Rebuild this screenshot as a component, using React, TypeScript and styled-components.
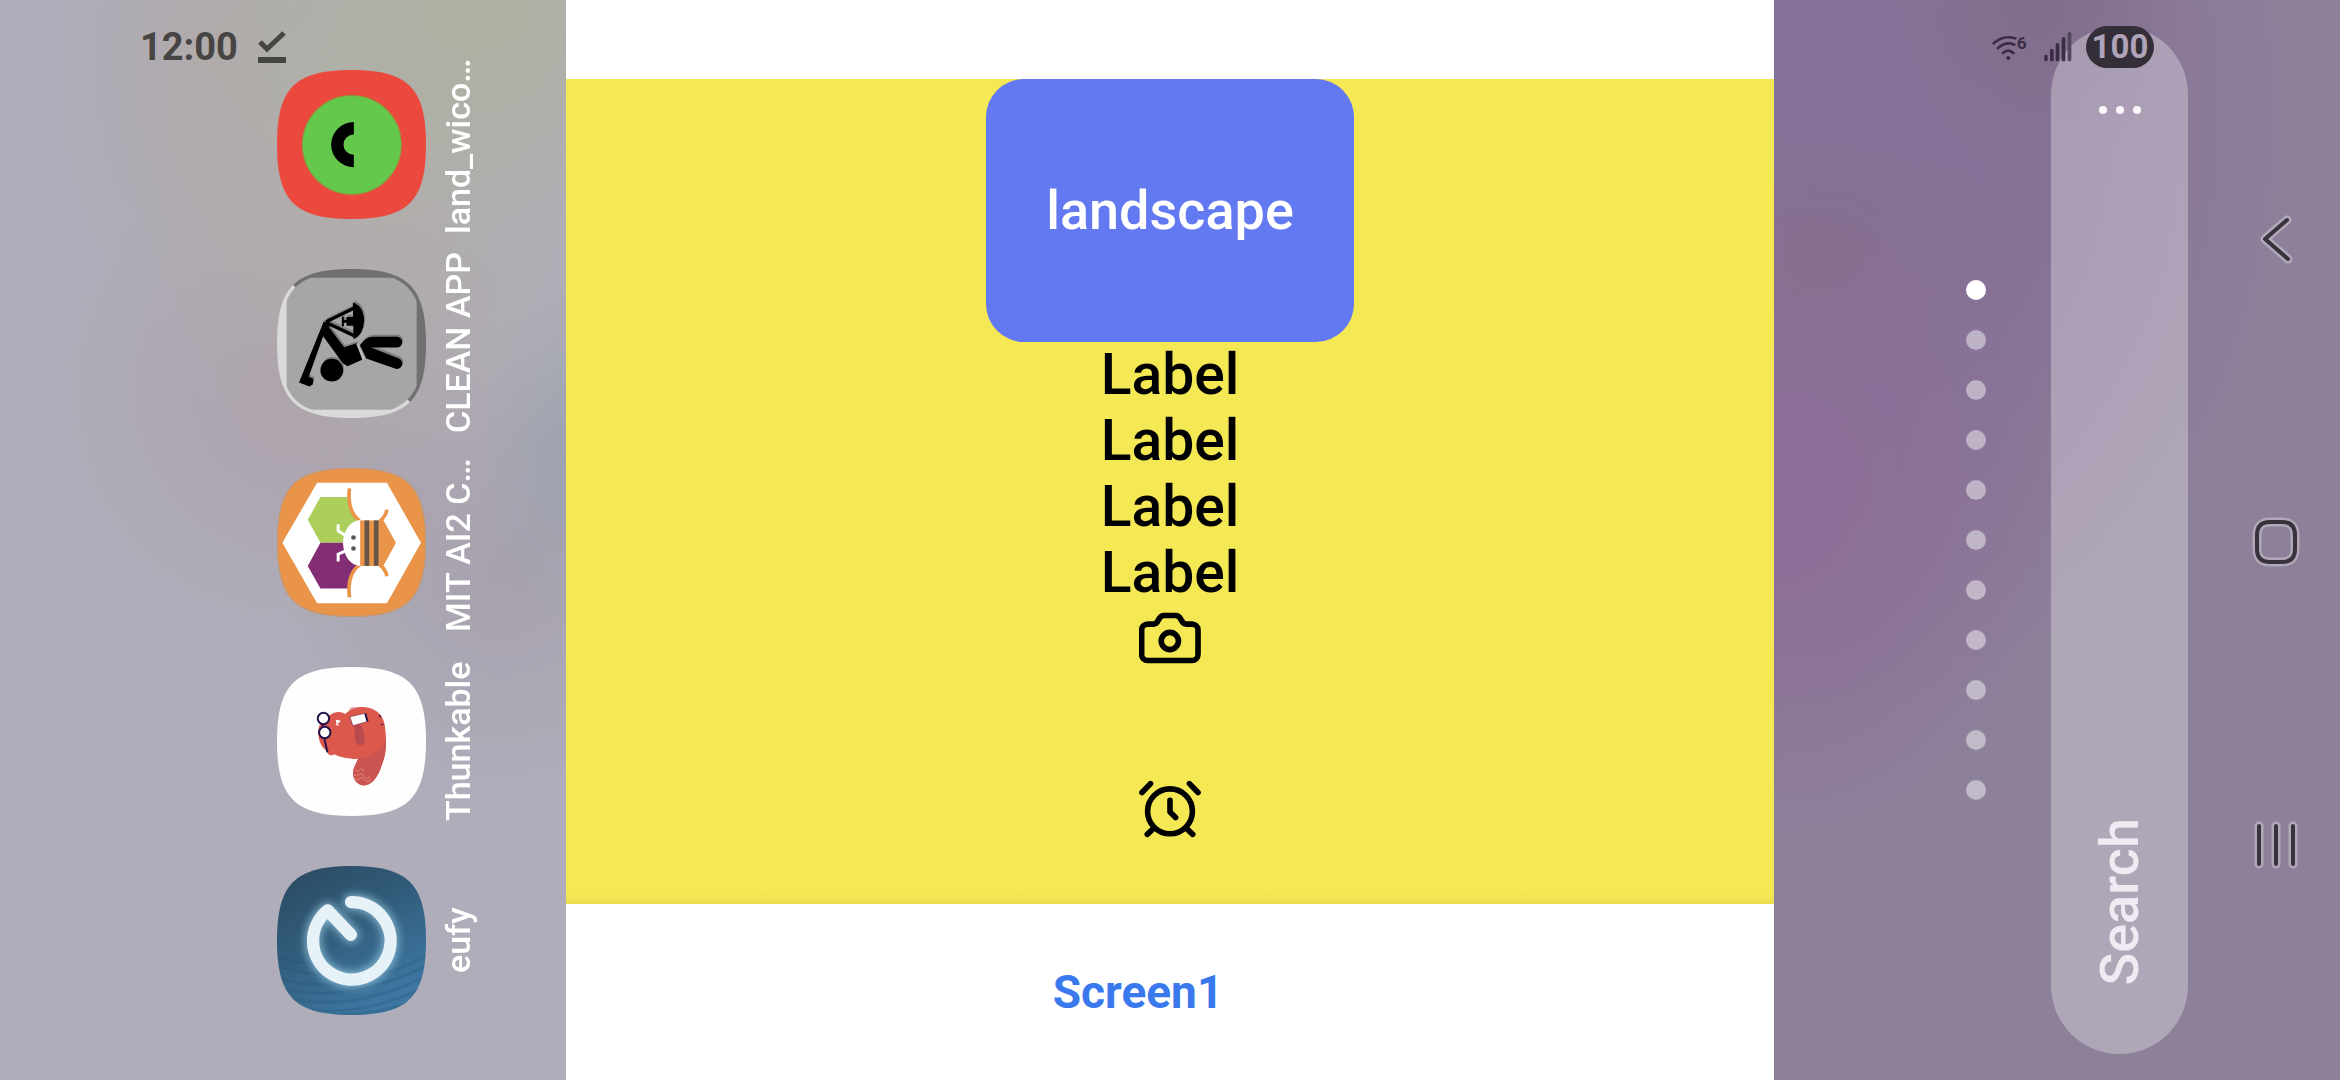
import React from 'react';
import styled, { createGlobalStyle } from 'styled-components';

const GlobalStyle = createGlobalStyle`
  *, *::before, *::after { box-sizing: border-box; }
  body {
    margin: 0;
    font-family: Roboto, "Liberation Sans", sans-serif;
    background: #ffffff;
  }
  button {
    margin: 0;
    padding: 0;
    border: 0;
    background: none;
    color: inherit;
    font: inherit;
    cursor: pointer;
  }
  svg { display: block; flex: none; }
`;

const Screen = styled.div`
  position: relative;
  display: grid;
  grid-template-columns: minmax(0, 566fr) minmax(0, 1208fr) minmax(0, 566fr);
  min-height: 100vh;
`;

/* ---------- status bar ---------- */

const StatusBar = styled.header`
  position: absolute;
  top: 26px;
  left: 0;
  right: 0;
  z-index: 1;
  display: flex;
  align-items: center;
  justify-content: space-between;
  height: 42px;
  padding: 0 186px 0 140px;
  pointer-events: none;
`;

const StatusGroup = styled.div<{ $gap: number }>`
  display: flex;
  align-items: center;
  gap: ${(p) => p.$gap}px;
`;

const Clock = styled.time`
  font-size: 38px;
  line-height: 40px;
  font-weight: 700;
  color: #474543;
`;

const Battery = styled.span`
  display: flex;
  align-items: center;
  justify-content: center;
  width: 68px;
  height: 42px;
  border-radius: 21px;
  background: #332e37;
  color: #aea3b8;
  font-size: 33px;
  line-height: 40px;
  font-weight: 700;
`;

/* ---------- launcher (left) ---------- */

const Launcher = styled.nav`
  display: flex;
  justify-content: flex-end;
  padding: 54px 87px 0 0;
  background:
    radial-gradient(ellipse 300px 220px at 480px 10px, #adb2a1 0%, rgba(173, 178, 161, 0) 100%),
    radial-gradient(ellipse 260px 330px at 380px 160px, rgba(178, 174, 168, 0.9) 0%, rgba(178, 174, 168, 0) 100%),
    radial-gradient(ellipse 150px 280px at 210px 60px, rgba(176, 168, 168, 0.8) 0%, rgba(176, 168, 168, 0) 100%),
    radial-gradient(ellipse 240px 240px at 300px 390px, rgba(173, 159, 169, 0.85) 0%, rgba(173, 159, 169, 0) 100%),
    radial-gradient(ellipse 90px 170px at 566px 460px, rgba(156, 163, 173, 0.9) 0%, rgba(156, 163, 173, 0) 100%),
    radial-gradient(ellipse 220px 220px at 500px 570px, rgba(167, 158, 172, 0.85) 0%, rgba(167, 158, 172, 0) 100%),
    #aeadb9;
`;

const AppList = styled.ul`
  display: flex;
  flex-direction: column;
  gap: 19px;
  margin: 0;
  padding: 0;
  list-style: none;
`;

const AppButton = styled.button`
  display: flex;
  align-items: center;
  gap: 11px;
  height: 180px;
`;

const AppName = styled.span<{ $cut?: boolean }>`
  writing-mode: vertical-rl;
  transform: rotate(180deg);
  height: 180px;
  font-size: 34px;
  line-height: 42px;
  font-weight: 500;
  text-align: ${(p) => (p.$cut ? 'start' : 'center')};
  white-space: nowrap;
  color: #ffffff;
`;

/* ---------- app preview (centre) ---------- */

const Preview = styled.main`
  display: flex;
  flex-direction: column;
  padding-top: 79px;
  background: #ffffff;
`;

const Canvas = styled.section`
  flex: 1;
  display: flex;
  flex-direction: column;
  align-items: center;
  background: linear-gradient(to top, #e8da52 0, #f0e354 5px, #f5e855 16px);
`;

const PrimaryButton = styled.button`
  width: 368px;
  height: 263px;
  border-radius: 38px;
  background: #6279f2;
  color: #ffffff;
  font-size: 54px;
  line-height: 66px;
  font-weight: 500;
`;

const TextLabel = styled.p`
  margin: 0;
  font-size: 57px;
  line-height: 66px;
  font-weight: 500;
  color: #000000;
`;

const IconStack = styled.div`
  display: flex;
  flex-direction: column;
  align-items: center;
  gap: 116px;
  padding-top: 6px;
`;

const TabBar = styled.footer`
  display: flex;
  align-items: center;
  justify-content: center;
  height: 176px;
  padding-right: 64px;
`;

const TabLink = styled.a`
  color: #3a78ee;
  font-size: 46px;
  line-height: 56px;
  font-weight: 700;
  text-decoration: none;
`;

/* ---------- home screen (right) ---------- */

const Home = styled.aside`
  display: flex;
  justify-content: flex-end;
  background:
    radial-gradient(ellipse 150px 180px at 260px 0, rgba(127, 109, 136, 0.8) 0%, rgba(127, 109, 136, 0) 100%),
    radial-gradient(ellipse 180px 150px at 50px 250px, rgba(134, 110, 140, 0.7) 0%, rgba(134, 110, 140, 0) 100%),
    radial-gradient(ellipse 280px 330px at 0 510px, #8c6e98 0%, rgba(140, 110, 152, 0.8) 35%, rgba(140, 110, 152, 0) 100%),
    radial-gradient(ellipse 440px 600px at 80px 110px, #84729a 0%, rgba(134, 113, 150, 0.9) 50%, rgba(134, 113, 150, 0) 100%),
    #8d8099;
`;

const Pager = styled.ul`
  display: flex;
  flex-direction: column;
  justify-content: center;
  gap: 30px;
  margin: 0 65px 0 0;
  padding: 0;
  list-style: none;
`;

const PageDot = styled.li<{ $active: boolean }>`
  width: 20px;
  height: 20px;
  border-radius: 50%;
  background: ${(p) => (p.$active ? '#ffffff' : 'rgba(255, 255, 255, 0.46)')};
`;

const SearchPill = styled.div`
  display: flex;
  flex-direction: column;
  align-items: center;
  justify-content: space-between;
  width: 137px;
  margin: 26px 0;
  padding: 70px 0 68px;
  border-radius: 69px;
  background: rgba(255, 255, 255, 0.3);
`;

const SearchButton = styled.button`
  writing-mode: vertical-rl;
  transform: rotate(180deg);
  font-size: 54px;
  line-height: 66px;
  font-weight: 500;
  color: #f0ebf3;
`;

const MoreButton = styled.button`
  display: flex;
  align-items: center;
  justify-content: center;
  height: 28px;
  width: 60px;
`;

const NavBar = styled.nav`
  display: flex;
  flex-direction: column;
  align-items: center;
  justify-content: center;
  gap: 243px;
  width: 128px;
  margin-left: 24px;
  padding-top: 4px;
`;

const NavButton = styled.button`
  display: flex;
  align-items: center;
  justify-content: center;
  width: 60px;
  height: 60px;
`;

/* ---------- drawings ---------- */

const SQUIRCLE =
  'M0 223C0 54 54 0 223 0S446 54 446 223 392 446 223 446 0 392 0 223Z';

function AppIcon({ id, x, y, children }: { id: string; x: number; y: number; children: React.ReactNode }) {
  return (
    <svg width="149" height="149" viewBox={`${x} ${y} 446 446`} aria-hidden="true">
      <clipPath id={id}>
        <path d={SQUIRCLE} transform={`translate(${x} ${y})`} />
      </clipPath>
      <g clipPath={`url(#${id})`}>{children}</g>
    </svg>
  );
}

const LandIcon = () => (
  <AppIcon id="clip-land" x={51} y={57}>
    <rect x="51" y="57" width="446" height="446" fill="#eb493d" />
    <circle cx="275" cy="281" r="148" fill="#64c84c" stroke="#8a9a3c" strokeWidth="3" />
    <path d="M281 213A68 67.500 0 0 0 281 348V311A31 30.500 0 0 1 281 250Z" fill="#000" />
  </AppIcon>
);

const Worker = () => (
  <>
    <circle cx="215" cy="957" r="34" />
    <path d="M191 811L203 816 146 976 160 983 158 1000 148 1006 117 994Z" />
    <path d="M198 812L284 770M198 814L282 854" fill="none" stroke="currentColor" strokeWidth="10" />
    <path d="M278 754Q310 764 312 808Q310 852 280 864Z" />
    <path d="M245 797h6v10h8v-9h22v26h-22v-9h-8v10h-6Z" />
    <path d="M190 812L206 818 208 830 252 888 290 876 306 926 262 945 248 936 189 855Z" />
    <path d="M299 882Q318 857 338 857H410A16 16 0 0 1 410 889H332L416 922A16 16 0 0 1 404 952L318 922Z" />
  </>
);

const CleanIcon = () => (
  <AppIcon id="clip-clean" x={51} y={654}>
    <path d="M51 654H497V1100Z" fill="#707070" />
    <path d="M51 654V1100H497Z" fill="#dadada" />
    <clipPath id="clip-clean-face">
      <rect x="80" y="680" width="389" height="395" rx="26" />
    </clipPath>
    <g clipPath="url(#clip-clean-face)">
      <path d={SQUIRCLE} transform="translate(60 663) scale(.96)" fill="#a6a6a6" />
    </g>
    <g fill="#6e6e6e" color="#6e6e6e" opacity=".7" transform="translate(3 -6)">
      <Worker />
    </g>
    <g fill="#000" color="#000">
      <Worker />
    </g>
    <path d="M291 877L311 925" stroke="#bdbdbd" strokeWidth="6" />
  </AppIcon>
);

const MitIcon = () => (
  <AppIcon id="clip-mit" x={51} y={50}>
    <rect x="51" y="50" width="446" height="446" fill="#e99449" />
    <path d="M67 274L171 94H380L482 274 380 455H171Z" fill="#fff" />
    <path d="M143 205L181 137H264Q266 190 300 207V274H181Z" fill="#accf5c" />
    <path d="M143 343L181 274H300V342Q266 359 264 411H181Z" fill="#832d75" />
    <path d="M355 207H370L407 274 370 342H355Z" fill="#e99449" />
    <g fill="none" stroke="#e99449" strokeWidth="11">
      <path d="M268 111C262 158 274 190 298 208M380 175Q376 196 358 210" />
      <path d="M268 437C262 390 274 358 298 340M380 374Q376 353 358 339" />
    </g>
    <path d="M301 206A52 68 0 0 0 301 343Z" fill="#fff" />
    <path d="M234 218V238L256 252M234 330V308L258 297" fill="none" stroke="#fff" strokeWidth="9" />
    <circle cx="280" cy="258" r="7" fill="#5b5450" />
    <circle cx="280" cy="291" r="7" fill="#5b5450" />
    <rect x="300" y="207" width="56" height="136" fill="#e99449" />
    <rect x="313" y="207" width="14" height="136" fill="#675548" />
    <rect x="341" y="207" width="14" height="136" fill="#675548" />
    <path d={SQUIRCLE} transform="translate(51 50)" fill="none" stroke="#b9997f" strokeWidth="5" />
  </AppIcon>
);

const ThunkableIcon = () => (
  <AppIcon id="clip-thunkable" x={51} y={648}>
    <rect x="51" y="648" width="446" height="446" fill="#fefefe" />
    <ellipse cx="280" cy="776" rx="13" ry="9" fill="#e3b9bb" />
    <path
      d="M175 850C172 820 188 800 210 792C225 779 245 781 255 789C275 768 300 766 320 769C352 774 370 795 374 825C380 870 378 900 365 940C355 975 335 1003 310 1003C285 1000 275 975 280 955C285 940 290 932 294 923C270 924 240 918 222 909C212 917 203 910 200 900C182 885 177 870 175 850Z"
      fill="#dd584c"
    />
    <path
      d="M377 868C378 900 374 920 365 940C355 975 335 1003 310 1003C285 1000 275 975 280 955C285 940 290 932 294 923C330 918 360 900 377 868Z"
      fill="#cb5350"
    />
    <path d="M282 824Q292 818 304 822L314 862Q314 880 302 883Q288 882 285 868Z" fill="#b94a4d" />
    <path
      d="M284 957q8 8 14-1t14 6M281 970q9 8 15 0t16 5 16 0M284 982q9 7 15 0t16 4 18-3"
      fill="none"
      stroke="#eba49a"
      strokeWidth="2"
    />
    <path d="M227 806l14 2-2 7h-8l6 7-8 1Z" fill="#fff" />
    <path d="M269 797L317 786 323 811 278 824Z" fill="#fff" stroke="#7b2a3c" strokeWidth="2" />
    <path d="M315 787L322 811" stroke="#25134d" strokeWidth="6" />
    <path d="M357 792l5 6M362 820h7" stroke="#51204a" strokeWidth="5" />
    <g stroke="#25134d" strokeWidth="6">
      <path d="M188 818V828M192 860L202 903" fill="none" />
      <circle cx="190" cy="802" r="17" fill="#fff" />
      <circle cx="194" cy="844" r="17" fill="#fff" />
    </g>
  </AppIcon>
);

const EUFY_MARK = 'M273 183A116 116 0 1 1 203 208L272 281';

const EufyIcon = () => (
  <AppIcon id="clip-eufy" x={51} y={75}>
    <defs>
      <linearGradient id="eufy-sky" x1="0" y1="0" x2=".55" y2="1">
        <stop offset="0" stopColor="#2b4a60" />
        <stop offset=".45" stopColor="#305a78" />
        <stop offset="1" stopColor="#3d77a2" />
      </linearGradient>
      <filter id="eufy-glow" x="-30%" y="-30%" width="160%" height="160%">
        <feGaussianBlur stdDeviation="13" />
      </filter>
    </defs>
    <rect x="51" y="75" width="446" height="446" fill="url(#eufy-sky)" />
    <g fill="none" stroke="#24506f" strokeWidth="8" opacity=".25">
      <path d="M51 410Q250 470 497 345M51 440Q260 490 497 375M80 470Q280 515 497 405M100 500Q300 535 497 435M51 375Q120 395 180 400M51 345Q90 360 140 366M200 521Q380 520 497 465" />
    </g>
    <g fill="none" strokeLinecap="round" strokeLinejoin="round">
      <path d={EUFY_MARK} stroke="#9fd0e6" strokeWidth="48" filter="url(#eufy-glow)" opacity=".75" />
      <path d={EUFY_MARK} stroke="#e6f1f8" strokeWidth="37" />
    </g>
  </AppIcon>
);

const CheckIcon = () => (
  <svg width="28" height="34" viewBox="0 0 28 34" fill="none" stroke="#474543" aria-hidden="true">
    <path d="M2 12L9 19 26 3" strokeWidth="5" />
    <path d="M0 30H28" strokeWidth="6" />
  </svg>
);

const WifiIcon = () => (
  <svg width="38" height="30" viewBox="38 58 114 90" fill="none" stroke="#3a2d43" strokeWidth="8" strokeLinecap="round" role="img" aria-label="Wi-Fi 6">
    <path d="M43 92Q72 66 108 77M56 106Q80 85 105 96M71 121Q87 107 102 121" />
    <circle cx="87" cy="136" r="6" fill="#3a2d43" stroke="none" />
    <text x="112" y="108" fontSize="52" fontWeight="700" fill="#3a2d43" stroke="none">6</text>
  </svg>
);

const SignalIcon = () => (
  <svg width="28" height="30" viewBox="190 68 84 90" fill="#3a2d43" role="img" aria-label="Signal">
    <rect x="191" y="136" width="10" height="20" rx="4" />
    <rect x="208" y="119" width="11" height="37" rx="4" />
    <rect x="225" y="102" width="11" height="54" rx="4" />
    <rect x="243" y="84" width="11" height="72" rx="4" />
    <rect x="261" y="69" width="11" height="87" rx="4" fill="#51465a" />
  </svg>
);

const CameraIcon = () => (
  <svg width="62" height="52" viewBox="297 815 187 156" fill="none" stroke="#000" strokeWidth="17" role="img" aria-label="Camera">
    <path d="M323 851H340C360 851 352 825 372 825H408C428 825 420 851 440 851H457A18 18 0 0 1 475 869V943A18 18 0 0 1 457 961H323A18 18 0 0 1 305 943V869A18 18 0 0 1 323 851Z" />
    <circle cx="390" cy="902" r="26" />
  </svg>
);

const AlarmIcon = () => (
  <svg width="62" height="58" viewBox="296 1317 188 174" fill="none" stroke="#000" strokeWidth="17" strokeLinecap="round" strokeLinejoin="round" role="img" aria-label="Alarm">
    <circle cx="390" cy="1411" r="68" />
    <path d="M390 1378V1413L407 1430M305 1354L331 1327M449 1327L475 1354M321 1481L341 1462M459 1481L439 1462" />
  </svg>
);

const MoreIcon = () => (
  <svg width="42" height="8" viewBox="0 0 42 8" fill="#fbf8fc" aria-hidden="true">
    <circle cx="4" cy="4" r="4" />
    <circle cx="21" cy="4" r="4" />
    <circle cx="38" cy="4" r="4" />
  </svg>
);

function NavGlyph({ d }: { d: string }) {
  return (
    <svg width="52" height="52" viewBox="-26 -26 52 52" fill="none" strokeLinecap="round" strokeLinejoin="round" aria-hidden="true">
      <path d={d} stroke="#b1a7b8" strokeWidth="9" />
      <path d={d} stroke="#38323d" strokeWidth="4" />
    </svg>
  );
}

/* ---------- data ---------- */

const apps = [
  { name: 'land_wico…', cut: true, Icon: LandIcon },
  { name: 'CLEAN APP', cut: false, Icon: CleanIcon },
  { name: 'MIT AI2 C…', cut: true, Icon: MitIcon },
  { name: 'Thunkable', cut: false, Icon: ThunkableIcon },
  { name: 'eufy', cut: false, Icon: EufyIcon },
];

const labels = ['Label', 'Label', 'Label', 'Label'];

const navItems = [
  { name: 'Back', d: 'M11 -19L-11 0L12 20' },
  {
    name: 'Home',
    d: 'M-6 -20H6Q19 -20 19 -7V7Q19 20 6 20H-6Q-19 20 -19 7V-7Q-19 -20 -6 -20Z',
  },
  { name: 'Recents', d: 'M-17 -19V19M0 -19V19M17 -19V19' },
];

const PAGE_COUNT = 11;

export default function App() {
  return (
    <Screen>
      <GlobalStyle />
      <StatusBar>
        <StatusGroup $gap={20}>
          <Clock>12:00</Clock>
          <CheckIcon />
        </StatusGroup>
        <StatusGroup $gap={14}>
          <WifiIcon />
          <SignalIcon />
          <Battery>100</Battery>
        </StatusGroup>
      </StatusBar>

      <Launcher aria-label="Apps">
        <AppList>
          {apps.map(({ name, cut, Icon }) => (
            <li key={name}>
              <AppButton type="button">
                <Icon />
                <AppName $cut={cut}>{name}</AppName>
              </AppButton>
            </li>
          ))}
        </AppList>
      </Launcher>

      <Preview>
        <Canvas>
          <PrimaryButton type="button">landscape</PrimaryButton>
          {labels.map((text, i) => (
            <TextLabel key={i}>{text}</TextLabel>
          ))}
          <IconStack>
            <CameraIcon />
            <AlarmIcon />
          </IconStack>
        </Canvas>
        <TabBar>
          <TabLink href="#screen1">Screen1</TabLink>
        </TabBar>
      </Preview>

      <Home>
        <Pager aria-label="Pages">
          {Array.from({ length: PAGE_COUNT }, (_, i) => (
            <PageDot key={i} $active={i === 0} />
          ))}
        </Pager>
        <SearchPill>
          <MoreButton type="button" aria-label="More options">
            <MoreIcon />
          </MoreButton>
          <SearchButton type="button">Search</SearchButton>
        </SearchPill>
        <NavBar aria-label="System">
          {navItems.map((item) => (
            <NavButton key={item.name} type="button" aria-label={item.name}>
              <NavGlyph d={item.d} />
            </NavButton>
          ))}
        </NavBar>
      </Home>
    </Screen>
  );
}
